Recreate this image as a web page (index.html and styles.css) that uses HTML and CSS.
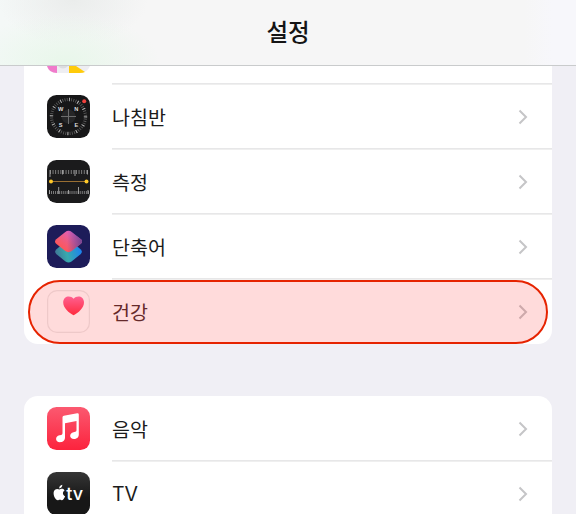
FILE: index.html
```html
<!DOCTYPE html>
<html lang="ko">
<head>
<meta charset="utf-8">
<title>설정</title>
<link rel="stylesheet" href="styles.css">
</head>
<body>
<header class="navbar"><h1>설정</h1></header>
<main class="content">
  <section class="group group-top">
    <div class="row row-partial">
      <svg class="icon-partial" width="43" height="8" viewBox="0 0 43 8">
        <path d="M0 0H43Q40 7 33 7H10Q2 7 0 0Z" fill="#eeeef2"/>
        <path d="M0 0H10V7Q2 7 0 0Z" fill="#f07bcb"/>
        <path d="M22 0H29L38 6Q36 7 33 7H22Z" fill="#ffcb0b"/>
        <path d="M11 0Q16 5 21 0" fill="#dcdde0"/>
      </svg>
      <div class="cell"></div>
    </div>
    <div class="row">
      <svg class="icon" viewBox="0 0 43 43">
        <rect width="43" height="43" rx="9.5" fill="#171718"/>
        <circle cx="21.5" cy="21.5" r="17" fill="none" stroke="#5e5e5e" stroke-width="3.2" stroke-dasharray=".8 1.425"/>
        <circle cx="21.5" cy="21.5" r="17" fill="none" stroke="#b5b5b5" stroke-width="3.4" stroke-dasharray=".9 8"/>
        <circle cx="21.5" cy="21.5" r="7" fill="#262627"/>
        <path d="M14 21.5H29M21.5 14V29" stroke="#6c6c6c" stroke-width="1"/>
        <g class="compass-text"><text x="13.7" y="16">W</text><text x="29.3" y="16">N</text><text x="13.7" y="32.3">S</text><text x="29.3" y="32.3">E</text></g>
        <circle cx="37.2" cy="6.2" r="2" fill="#f0413d"/>
      </svg>
      <div class="cell"><span>나침반</span><svg class="chevron" viewBox="0 0 10 16"><path d="M1.5 1.5L8 8L1.5 14.5"/></svg></div>
    </div>
    <div class="row">
      <svg class="icon" viewBox="0 0 43 43">
        <rect width="43" height="43" rx="9.5" fill="#1b1b1c"/>
        <path d="M3 12H41" stroke="#858585" stroke-width="4" stroke-dasharray=".9 1.7"/>
        <path d="M3 10V17M15.5 10V14.500M28 10V16M40.500 10V14.500" stroke="#aaa" stroke-width=".9"/>
        <path d="M2 32.500H42" stroke="#858585" stroke-width="3" stroke-dasharray=".9 1.150"/>
        <path d="M2.500 30V34M11.700 27V34M21.500 30V34M31.500 27V34M41 30V34" stroke="#aaa" stroke-width=".9"/>
        <path d="M4 21.500H39" stroke="#a87835" stroke-width=".9"/>
        <circle cx="4" cy="21.500" r="2" fill="#ffc928"/><circle cx="39.500" cy="21.500" r="2" fill="#ffc928"/>
      </svg>
      <div class="cell"><span>측정</span><svg class="chevron" viewBox="0 0 10 16"><path d="M1.500 1.500L8 8L1.500 14.500"/></svg></div>
    </div>
    <div class="row">
      <svg class="icon" viewBox="0 0 43 43">
        <defs>
          <linearGradient id="pink" x1=".2" y1=".8" x2=".8" y2=".2"><stop offset="0" stop-color="#ff5658"/><stop offset=".45" stop-color="#ee5c80"/><stop offset="1" stop-color="#dd60c4"/></linearGradient>
          <linearGradient id="blue" x1="0" y1=".5" x2="1" y2=".3"><stop offset="0" stop-color="#3f7796"/><stop offset=".4" stop-color="#38aaae"/><stop offset="1" stop-color="#197ff5"/></linearGradient>
          <linearGradient id="fold" x1="0" y1="0" x2="1" y2="0"><stop offset=".45" stop-color="#75458f" stop-opacity="0"/><stop offset="1" stop-color="#75458f"/></linearGradient>
        </defs>
        <rect width="43" height="43" rx="9.500" fill="#1d1c59"/>
        <path d="M18.500 16.500Q21.500 14.500 24.500 16.500L33.800 24.500Q36 26.800 33.800 29L24.500 36.500Q21.500 38.500 18.500 36.500L9.200 29Q7 26.800 9.200 24.500Z" fill="url(#blue)"/>
        <path id="top-tile" d="M18.300 7Q21.500 4.500 24.700 7L33.800 14.200Q36.200 16.500 33.800 18.800L24.700 26Q21.500 28.300 18.300 26L9.200 18.800Q6.800 16.500 9.200 14.200Z" fill="url(#pink)"/>
        <path d="M18.300 7Q21.500 4.500 24.700 7L33.800 14.200Q36.200 16.500 33.800 18.800L24.700 26Q21.500 28.300 18.300 26L9.200 18.800Q6.800 16.500 9.200 14.200Z" fill="url(#fold)"/>
      </svg>
      <div class="cell"><span>단축어</span><svg class="chevron" viewBox="0 0 10 16"><path d="M1.500 1.500L8 8L1.500 14.500"/></svg></div>
    </div>
    <div class="row row-health">
      <svg class="icon" viewBox="0 0 43 43">
        <defs><linearGradient id="heart" x1="0" y1="0" x2="0" y2="1"><stop offset="0" stop-color="#ff70a8"/><stop offset="1" stop-color="#ff3348"/></linearGradient></defs>
        <rect x=".6" y=".6" width="41.800" height="41.800" rx="9.500" fill="#fff" stroke="#eceaea" stroke-width="1.200"/>
        <path d="M26.600 25.200C22 23 16.200 18 16.200 12.500C16.200 6 23.300 4.800 26.600 8.700C29.900 4.800 37 6 37 12.500C37 18 31.200 23 26.600 25.200Z" fill="url(#heart)"/>
      </svg>
      <div class="cell"><span>건강</span><svg class="chevron" viewBox="0 0 10 16"><path d="M1.500 1.500L8 8L1.500 14.500"/></svg></div>
      <div class="highlight"></div>
    </div>
  </section>
  <section class="group group-media">
    <div class="row">
      <svg class="icon" viewBox="0 0 43 43">
        <defs><linearGradient id="music" x1="0" y1="0" x2="0" y2="1"><stop offset="0" stop-color="#fb5970"/><stop offset="1" stop-color="#fc233d"/></linearGradient></defs>
        <rect width="43" height="43" rx="9.500" fill="url(#music)"/>
        <path d="M15.500 10.200Q15.600 9.100 16.800 8.800L30.200 6.200Q31.800 6 31.800 7.500V27.500C31.800 30.500 29.500 32 27 32C22 32 22 26 26.500 25.200L28.300 24.800Q29.500 24.500 29.500 23.200V14L18 16.300V30.500C18 33.500 15.800 35.200 13 35.200C8 35.200 7.800 29.300 12.500 28.300L14.300 27.900Q15.500 27.600 15.500 26.200Z" fill="#fff"/>
      </svg>
      <div class="cell"><span>음악</span><svg class="chevron" viewBox="0 0 10 16"><path d="M1.500 1.500L8 8L1.500 14.500"/></svg></div>
    </div>
    <div class="row">
      <svg class="icon" viewBox="0 0 43 43">
        <defs><linearGradient id="tv" x1="0" y1="0" x2="0" y2="1"><stop offset="0" stop-color="#363636"/><stop offset=".6" stop-color="#171717"/><stop offset="1" stop-color="#171717"/></linearGradient></defs>
        <rect width="43" height="43" rx="9.500" fill="url(#tv)"/>
        <path d="M12.600 17.400C14 16.500 16.400 16.600 17.500 18.400C15.200 19.900 15.500 23 18.100 24.200C17.300 26.500 15.900 28.400 14.600 28.200C13.300 27.700 12.400 27.700 11.200 28.200C8.800 28.600 6 23.700 6.700 20C7.400 16.600 10.200 16.500 12.600 17.400ZM12.200 16.500C12.100 14.500 13.500 13 15.300 12.800C15.500 14.700 14.100 16.400 12.200 16.500Z" fill="#fff"/>
        <text class="tv-text" x="19.300" y="28">tv</text>
      </svg>
      <div class="cell"><span class="latin">TV</span><svg class="chevron" viewBox="0 0 10 16"><path d="M1.500 1.500L8 8L1.500 14.500"/></svg></div>
    </div>
  </section>
</main>
</body>
</html>
```
FILE: styles.css
```css
* { box-sizing: border-box; }
body {
  margin: 0;
  height: 514px;
  overflow: hidden;
  background: #f0eff5;
  color: #1b1b1b;
  font-family: "Noto Sans CJK KR", sans-serif;
}
.navbar {
  height: 66px;
  display: flex;
  align-items: center;
  justify-content: center;
  padding-bottom: 3px;
  border-bottom: 1px solid #c9cbcc;
  background:
    radial-gradient(ellipse 95px 48px at 65px 62px, rgba(231, 247, 233, .9), transparent),
    radial-gradient(ellipse 75px 45px at 73px 0, rgba(234, 236, 235, .95), transparent),
    linear-gradient(90deg, #f4f8f7 0, #f6f6f6 24%, #f6f6f6 91%, #f7f7fb 96%);
}
h1 {
  margin: 0;
  font-size: 23.5px;
  font-weight: 500;
  line-height: 34px;
  color: #141414;
}
.content { padding: 0 24px; }
.group { background: #fff; }
.group-top { border-radius: 0 0 14px 14px; }
.group-media { margin-top: 52px; border-radius: 14px 14px 0 0; }
.row {
  position: relative;
  display: flex;
  align-items: center;
  height: 65px;
  padding-left: 23px;
  gap: 22px;
}
.row-partial { height: 18px; align-items: flex-start; }
.row-health { color: #4c3131; }
.icon, .icon-partial { flex: none; width: 43px; }
.icon { height: 43px; }
.cell {
  flex: 1;
  align-self: stretch;
  display: flex;
  align-items: center;
  justify-content: space-between;
  padding-right: 24px;
  box-shadow: inset 0 -1px #e7e7e8, 0 1px #efefef;
  font-size: 19.5px;
}
.cell span { line-height: 29px; }
.cell .latin {
  padding-top: 1px;
  font-family: Inter, sans-serif;
  font-size: 19.5px;
}
.row:last-child .cell { box-shadow: none; }
.chevron {
  width: 10px;
  height: 16px;
  fill: none;
  stroke: #c5c5c7;
  stroke-width: 2;
}
.highlight {
  position: absolute;
  left: 4px;
  right: 4px;
  top: 1px;
  height: 64px;
  border: 2px solid #e62300;
  border-radius: 32px;
  background: rgba(255, 0, 0, .14);
}
.compass-text {
  font: bold 5.7px "Liberation Sans", sans-serif;
  fill: #dedede;
  text-anchor: middle;
}
.tv-text {
  font: 500 18px Inter, sans-serif;
  fill: #fff;
}
```
